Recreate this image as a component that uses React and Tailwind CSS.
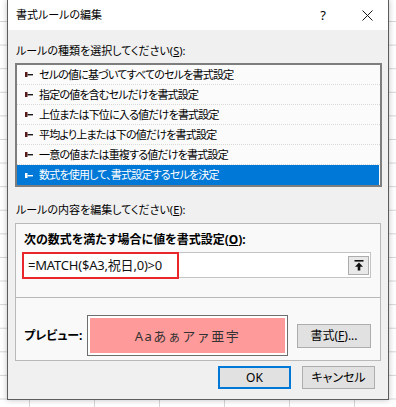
import React from "react";

const rows = [
  "セルの値に基づいてすべてのセルを書式設定",
  "指定の値を含むセルだけを書式設定",
  "上位または下位に入る値だけを書式設定",
  "平均より上または下の値だけを書式設定",
  "一意の値または重複する値だけを書式設定",
  "数式を使用して、書式設定するセルを決定",
];

function Marker({ selected }) {
  const c = selected ? "#ffffff" : "#1a1a1a";
  return (
    <svg width="8" height="7" viewBox="0 0 8 7" className="shrink-0">
      <rect x="0" y="1" width="2.5" height="5" fill={selected ? "#ffffff" : "#5a1a1a"} />
      <rect x="2.5" y="3" width="5.5" height="1.4" fill={c} />
    </svg>
  );
}

export default function App() {
  return (
    <div className="w-[396px] h-[407px] overflow-hidden bg-white [background-image:linear-gradient(to_bottom,#d6d6d6_1px,transparent_1px),linear-gradient(to_right,#d6d6d6_1px,transparent_1px)] [background-size:65px_23.6px] [background-position:29px_21px] font-['Noto_Sans','Noto_Sans_CJK_JP',sans-serif] text-[12px] text-black">
      <div className="ml-[7px] w-[382px] h-[400px] border border-t-0 border-[#5c5c5c] bg-[#f0f0f0] flex flex-col shadow-[0_0_6px_rgba(0,0,0,0.25)]">
        {/* title bar */}
        <div className="h-[30px] bg-white flex items-center pl-[8px] shrink-0">
          <div className="flex-1 text-[11px] leading-[16px] [font-feature-settings:'palt'_1]">書式ルールの編集</div>
          <div className="w-[46px] flex justify-center text-[13px] leading-[16px]">?</div>
          <div className="w-[42px] flex justify-center">
            <svg width="11" height="11" viewBox="0 0 11 11">
              <path d="M0.5 0.5 L10.5 10.5 M10.5 0.5 L0.5 10.5" stroke="#1a1a1a" strokeWidth="1" />
            </svg>
          </div>
        </div>

        {/* body */}
        <div className="flex flex-col pl-[7px] pt-[13px] [font-feature-settings:'palt'_1]">
          <div className="text-[11px] leading-[16px] pl-[1px]">
            ルールの種類を選択してください(<span className="underline">S</span>):
          </div>

          <div className="mt-[4px] w-[367px] border-2 border-[#7e7e7e] bg-[#fbfbfb] flex flex-col">
            {rows.map((r, i) => {
              const sel = i === rows.length - 1;
              return (
                <div
                  key={i}
                  className={
                    sel
                      ? "h-[20px] flex items-center gap-[6px] pl-[8px] mr-[1px] bg-[#0078d7] text-white"
                      : "h-[20px] flex items-center gap-[6px] pl-[8px] border-b border-dotted border-[#d9d9d9]"
                  }
                >
                  <Marker selected={sel} />
                  <span className="text-[11px] tracking-[-0.8px] leading-[16px]">{r}</span>
                </div>
              );
            })}
          </div>

          <div className="mt-[15px] text-[11px] leading-[16px] pl-[1px]">
            ルールの内容を編集してください(<span className="underline">E</span>):
          </div>

          <div className="mt-[5px] w-[366px] border border-[#b9b9b9] bg-[#f9f9f9] flex flex-col">
            <div className="pt-[8px] pl-[6px] flex flex-col">
              <div className="font-bold leading-[16px] pl-[2px]">
                次の数式を満たす場合に値を書式設定(<span className="underline">O</span>):
              </div>
              <div className="relative mt-[4px] w-[349px] h-[26px] border border-[#c4c4c4] bg-white flex items-center">
                <span className="pl-[5px] text-[13px] tracking-[-0.2px] leading-[16px] text-[#111]">
                  =MATCH($A3,祝日,0)&gt;0
                </span>
                <div className="ml-auto mr-[1px] w-[21px] h-[19px] border border-[#adadad] bg-[#e9e9e9] flex items-center justify-center">
                  <svg width="10" height="11" viewBox="0 0 10 11">
                    <rect x="0.5" y="0" width="9" height="1.6" fill="#111" />
                    <path d="M5 2.6 L9 6.8 L6.3 6.8 L6.3 10.5 L3.7 10.5 L3.7 6.8 L1 6.8 Z" fill="#111" />
                  </svg>
                </div>
                <div className="absolute left-[-1px] top-[-1px] w-[157px] h-[27px] border-2 border-[#e8262b]" />
              </div>
            </div>

            <div className="mt-[19px] h-px bg-[#b9b9b9]" />

            <div className="pt-[17px] pb-[4px] pl-[8px] flex items-center">
              <div className="w-[63px] font-bold leading-[16px]">プレビュー:</div>
              <div className="w-[201px] h-[41px] border border-[#6e6e6e] bg-white p-[2px]">
                <div className="w-full h-full bg-[#ff9a9a] flex items-center justify-center text-[13px] tracking-[1.5px] text-[#333] leading-[16px] [font-feature-settings:normal]">
                  Aaあぁアァ亜宇
                </div>
              </div>
              <div className="ml-[9px] w-[74px] h-[24px] border border-[#adadad] bg-[#e1e1e1] flex items-center justify-center leading-[16px]">
                書式(<span className="underline">F</span>)...
              </div>
            </div>
          </div>

          <div className="mt-[5px] w-[366px] flex justify-end gap-[11px] pr-[6px]">
            <div className="w-[73px] h-[23px] border-2 border-[#0078d7] bg-[#e1e1e1] flex items-center justify-center leading-[16px]">
              OK
            </div>
            <div className="w-[73px] h-[23px] border border-[#adadad] bg-[#e1e1e1] flex items-center justify-center leading-[16px]">
              キャンセル
            </div>
          </div>
        </div>
      </div>
    </div>
  );
}
